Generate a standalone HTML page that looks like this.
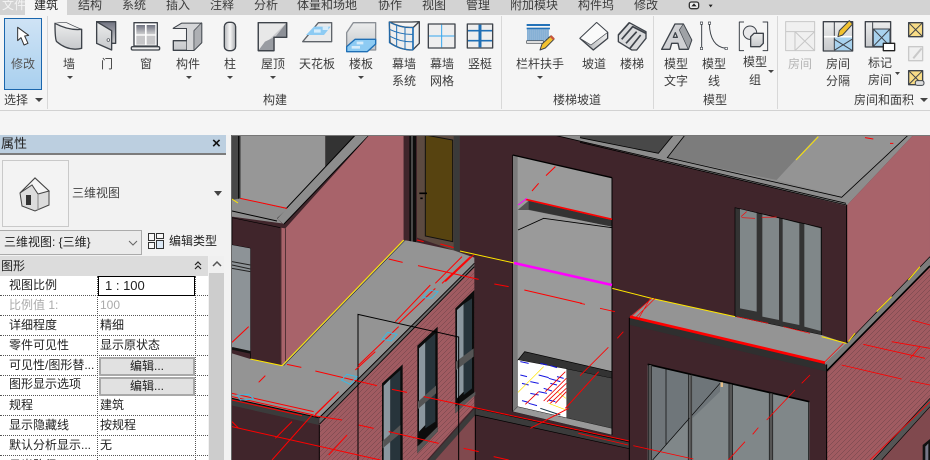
<!DOCTYPE html>
<html lang="zh"><head><meta charset="utf-8"><title>Revit</title>
<style>
html,body{margin:0;padding:0;width:930px;height:460px;overflow:hidden;background:#f5f5f5}
body{position:relative;font-family:"Liberation Sans","Noto Sans CJK SC",sans-serif;font-size:12px;color:#3c3c3c;line-height:16px}
.a{position:absolute;white-space:nowrap}
.c{position:absolute;white-space:nowrap;transform:translateX(-50%)}
svg{position:absolute;left:0;top:0}
#tabs{position:absolute;left:0;top:0;width:930px;height:15px;background:#d3d3d3}
#act{position:absolute;left:25px;top:0;width:42px;height:15px;background:#f5f5f5}
#rb{position:absolute;left:0;top:110px;width:930px;height:1px;background:#d2d2d2}
.sep{position:absolute;top:16px;width:1px;height:93px;background:#d8d8d8}
#mod{position:absolute;left:4px;top:18px;width:36px;height:70px;border:1px solid #1a66ad;background:linear-gradient(#cfe3f5,#a9d0ef)}
#prop{position:absolute;left:0;top:135px;width:231px;height:325px;background:#f2f2f2}
#title{position:absolute;left:0;top:0;width:226px;height:18px;background:#bccfe0;color:#222}
#rule{position:absolute;left:0;top:18px;width:226px;height:2px;background:#7c7c7c}
#tile{position:absolute;left:2px;top:25px;width:65px;height:65px;border:1px solid #c9c9c9;background:#f3f3f3}
#dd{position:absolute;left:-1px;top:95px;width:141px;height:23px;border:1px solid #ababab;background:#ebebeb;color:#222}
#hd{position:absolute;left:0;top:121px;width:208px;height:20px;background:#dcdcdc;color:#222}
#sb{position:absolute;left:209px;top:121px;width:15px;height:204px;background:#cdcdcd}
#sbt{position:absolute;left:0;top:0;width:15px;height:17px;background:#f0f0f0}
#tbl{position:absolute;left:0;top:141px;width:208px;height:184px;background:#fff;color:#222}
.ln{position:absolute;left:0;width:208px;height:0;border-top:1px dotted #555}
.vl{position:absolute;top:0;height:184px;width:0;border-left:1px dotted #555}
.k{position:absolute;left:9px;white-space:nowrap}
.v{position:absolute;left:100px;white-space:nowrap}
.b{position:absolute;left:99px;width:92px;height:15px;border:2px solid #a9a9a9;background:#e1e1e1;text-align:center;line-height:15px;color:#222}
#f1{position:absolute;left:98px;top:0;width:95px;height:18px;border:1px solid #000;background:#fff;line-height:18px;font-size:13px;text-indent:6px}
</style></head><body>
<div id="tabs"></div><div id="act"></div>
<div class="c" style="left:14px;top:-3px;color:#f3f3f3">文件</div>
<div class="c" style="left:46px;top:-3px;color:#222">建筑</div>
<div class="c" style="left:90px;top:-3px">结构</div>
<div class="c" style="left:134px;top:-3px">系统</div>
<div class="c" style="left:178px;top:-3px">插入</div>
<div class="c" style="left:222px;top:-3px">注释</div>
<div class="c" style="left:266px;top:-3px">分析</div>
<div class="c" style="left:327px;top:-3px">体量和场地</div>
<div class="c" style="left:390px;top:-3px">协作</div>
<div class="c" style="left:434px;top:-3px">视图</div>
<div class="c" style="left:478px;top:-3px">管理</div>
<div class="c" style="left:534px;top:-3px">附加模块</div>
<div class="c" style="left:596px;top:-3px">构件坞</div>
<div class="c" style="left:646px;top:-3px">修改</div>

<div id="mod"></div>
<div class="sep" style="left:47px"></div><div class="sep" style="left:501px"></div>
<div class="sep" style="left:653px"></div><div class="sep" style="left:777px"></div>
<div id="rb"></div>

<div class="c" style="left:23px;top:56px;color:#555">修改</div>
<div class="c" style="left:16px;top:92px">选择</div>
<div class="c" style="left:69px;top:56px">墙</div>
<div class="c" style="left:107px;top:56px">门</div>
<div class="c" style="left:146px;top:56px">窗</div>
<div class="c" style="left:188px;top:56px">构件</div>
<div class="c" style="left:230px;top:56px">柱</div>
<div class="c" style="left:273px;top:56px">屋顶</div>
<div class="c" style="left:317px;top:56px">天花板</div>
<div class="c" style="left:361px;top:56px">楼板</div>
<div class="c" style="left:404px;top:56px">幕墙</div><div class="c" style="left:404px;top:73px">系统</div>
<div class="c" style="left:442px;top:56px">幕墙</div><div class="c" style="left:442px;top:73px">网格</div>
<div class="c" style="left:480px;top:56px">竖梃</div>
<div class="c" style="left:540px;top:56px">栏杆扶手</div>
<div class="c" style="left:594px;top:56px">坡道</div>
<div class="c" style="left:632px;top:56px">楼梯</div>
<div class="c" style="left:676px;top:56px">模型</div><div class="c" style="left:676px;top:73px">文字</div>
<div class="c" style="left:714px;top:56px">模型</div><div class="c" style="left:714px;top:73px">线</div>
<div class="c" style="left:755px;top:54px">模型</div><div class="c" style="left:755px;top:72px">组</div>
<div class="c" style="left:800px;top:56px;color:#b5b5b5">房间</div>
<div class="c" style="left:838px;top:56px">房间</div><div class="c" style="left:838px;top:73px">分隔</div>
<div class="c" style="left:880px;top:55px">标记</div><div class="c" style="left:880px;top:72px">房间</div>
<div class="c" style="left:275px;top:92px">构建</div>
<div class="c" style="left:577px;top:92px">楼梯坡道</div>
<div class="c" style="left:715px;top:92px">模型</div>
<div class="c" style="left:884px;top:92px">房间和面积</div>

<!-- ribbon icons -->
<svg width="930" height="135" viewBox="0 0 930 135">
<defs>
<linearGradient id="g1" x1="0" y1="0" x2="0" y2="1"><stop offset="0" stop-color="#eceded"/><stop offset="1" stop-color="#c6c8cb"/></linearGradient>
<linearGradient id="g2" x1="0" y1="0" x2="0" y2="1"><stop offset="0" stop-color="#6f7280"/><stop offset="1" stop-color="#cfcfd0"/></linearGradient>
<linearGradient id="g3" x1="0" y1="0" x2="1" y2="0"><stop offset="0" stop-color="#b4b6b9"/><stop offset=".5" stop-color="#f7f7f7"/><stop offset="1" stop-color="#a9abae"/></linearGradient>
<linearGradient id="g4" x1="0" y1="0" x2="1" y2="0"><stop offset="0" stop-color="#9da0a4"/><stop offset="1" stop-color="#f0f0f0"/></linearGradient>
</defs>
<g transform="scale(.3333)" stroke="#3e434a" stroke-width="4" fill="url(#g1)" stroke-linejoin="round">
<path d="M53 82V122L63 113 72 135 84 130 74 108 86 106Z" fill="#fff" stroke="#333" stroke-width="3"/>
<path d="M165 70Q205 92 245 88V145Q205 155 170 125 165 118 165 70Z"/><path d="M165 70Q185 66 200 68 225 80 245 88" fill="#f4f4f4" stroke-width="2"/>
<path d="M290 65H347V130H290Z" fill="url(#g2)"/><path d="M290 65 335 92V150L290 130Z"/><circle cx="325" cy="120" r="4" fill="#fff" stroke-width="2"/>
<rect x="402" y="68" width="70" height="70" fill="#fff"/><rect x="409" y="75" width="26" height="28" fill="url(#g2)" stroke="none"/><rect x="440" y="75" width="26" height="28" fill="url(#g2)" stroke="none"/><rect x="409" y="107" width="26" height="27" fill="#c6c6c8" stroke="none"/><rect x="440" y="107" width="26" height="27" fill="#c6c6c8" stroke="none"/><rect x="394" y="140" width="85" height="10" rx="4" fill="#eee"/>
<path d="M520 85 545 70H605V128L582 151H520V122H560V85Z"/><path d="M520 85 545 70H605L582 92V151H560V85Z" fill="#d5d6d8" stroke-width="2"/><path d="M582 92V151L605 128V68Z" fill="#aeb0b4" stroke-width="2"/>
<rect x="673" y="67" width="34" height="85" rx="13" fill="url(#g3)"/>
<path d="M775 68H860V112H822V152H775Z" fill="#c9cacd"/><path d="M775 68H860L825 102 775 152Z" fill="#e8e8e8" stroke="none"/><path d="M860 68V112H825Z" fill="#8d9097" stroke="none"/><path d="M775 152H822V112L795 125Z" fill="#999ca2" stroke="none"/><path d="M775 68H860V112H822V152H775Z" fill="none"/>
</g>
<g transform="translate(310,0) scale(.3333)" stroke="#3e434a" stroke-width="4" fill="url(#g1)" stroke-linejoin="round">
<path d="M-22 125 25 68H65V125Z" fill="#e9eaeb" stroke="#5f646a"/><path d="M-12 105 12 80H62L42 105Z" fill="#8dcbf3" stroke="none"/><path d="M12 88H32V98H12ZM38 80H55V90H38Z" fill="#d6ecfa" stroke="none"/>
<path d="M110 98 130 68H197V150H110Z" stroke="#8b9096"/><path d="M110 140 135 118H197V132L172 155H110Z" fill="#8dcbf3" stroke="#1f6fb5"/><path d="M140 125H160V133H140ZM125 138H150V146H125Z" fill="#d6ecfa" stroke="none"/>
<path d="M238 66Q275 85 310 82L328 65V130L308 150Q270 150 240 128Z" fill="#eee"/><path d="M310 82V150M260 76V140M285 82V148M238 88Q275 105 310 103M238 108Q275 128 310 125" fill="none" stroke="#1f6fb5" stroke-width="3"/><path d="M238 66H305L328 65" fill="none"/><path d="M238 66V128Q270 150 308 150V82Q272 85 238 66Z" fill="none" stroke="#1f6fb5" stroke-width="3"/>
<rect x="355" y="72" width="80" height="72" fill="#eee"/><path d="M395 74V142M357 108H433" stroke="#35a6ee" stroke-width="3" fill="none"/>
<rect x="472" y="72" width="76" height="72" fill="#eee"/><path d="M510 74V142" stroke="#1f6fb5" stroke-width="9" fill="none"/><path d="M474 92H546M474 122H546" stroke="#1f6fb5" stroke-width="5" fill="none"/>
<rect x="650" y="72" width="70" height="6" fill="#2372b8" stroke="none"/><rect x="650" y="83" width="70" height="5" fill="#2372b8" stroke="none"/><path d="M654 88V122M660 88V122M666 88V122M672 88V122M678 88V122M684 88V122M690 88V122M696 88V122M702 88V122M708 88V122M714 88V122" stroke="#2372b8" stroke-width="3"/><rect x="650" y="122" width="50" height="8" fill="#ddd" stroke-width="2"/>
<path d="M690 150 696 132 722 108 732 118 706 144Z" fill="#f2c230" stroke-width="3"/><path d="M722 108 732 118" stroke="#c8553d" stroke-width="7"/>
<path d="M810 115 860 68 893 97V115L850 150Z" fill="url(#g4)"/><path d="M810 115 860 68 893 97 843 135Z" fill="#fafafa" stroke-width="2"/>
</g>
<g transform="translate(620,0) scale(.3333)" stroke="#3e434a" stroke-width="4" fill="url(#g1)" stroke-linejoin="round">
<path d="M-5 105 28 68 78 95V115L50 150H35L-5 125Z" fill="#dadbdd"/><path d="M-5 105 28 68M5 118 38 80 78 100M18 130 50 95M30 145 62 105" fill="none" stroke-width="5"/>
<path d="M125 148 165 72H190L215 120 205 148H178L174 130H155L150 148ZM160 112H172L166 98Z" fill="#d0d1d4"/><path d="M190 72 215 120 205 148 178 90Z" fill="#9fa2a6" stroke-width="2"/>
<path d="M245 70V145M268 70Q270 140 318 145" fill="none" stroke-width="3"/><g fill="#fff" stroke-width="2"><rect x="241" y="66" width="7" height="7"/><rect x="241" y="142" width="7" height="7"/><rect x="265" y="66" width="7" height="7"/><rect x="315" y="142" width="7" height="7"/></g>
<path d="M372 66H358V152H372M428 66H443V152H428" fill="none" stroke-width="3"/><circle cx="390" cy="98" r="20" fill="#e8e8ea" stroke-width="3"/><path d="M392 110 402 100H430V130L420 140H392Z"/>
<g stroke="#c7c7c7" fill="none" stroke-width="3"><rect x="497" y="65" width="87" height="87" fill="#f0f0f0"/><path d="M497 95H584M525 95V152M525 95 584 152M584 95 525 152"/></g>
<rect x="610" y="65" width="88" height="88" fill="url(#g1)"/><path d="M643 110H696V151H643Z" fill="#a8d2ee" stroke="none"/><path d="M643 118 696 151M696 118 643 151M643 65V150" fill="none" stroke-width="3"/><path d="M612 110H696" stroke="#fff" stroke-width="5"/>
<path d="M654 110 658 92 688 62 698 72 668 105Z" fill="#f2c230" stroke-width="3"/>
<rect x="736" y="65" width="76" height="76" fill="url(#g1)"/><path d="M758 67V139M760 87H810V139H760Z" fill="#a8d2ee" stroke-width="3"/><path d="M760 87 810 139M810 87 760 139" fill="none" stroke-width="3"/><rect x="790" y="130" width="34" height="22" fill="#fff" stroke="#222"/>
<rect x="866" y="68" width="42" height="42" fill="#f8dc86"/><path d="M868 70 906 108M906 70 868 108" fill="none" stroke-width="3"/>
<rect x="866" y="140" width="42" height="42" fill="#f0f0f0" stroke="#c9c9c9"/><path d="M880 175 905 145" stroke="#c9c9c9" stroke-width="6"/>
<rect x="866" y="212" width="42" height="42" fill="#f8dc86"/><path d="M868 214 906 252M906 214 868 252" fill="none" stroke-width="3"/><rect x="886" y="242" width="26" height="14" rx="6" fill="#ddd" stroke-width="3"/>
<rect x="208" y="6" width="28" height="20" rx="6" fill="#eee" stroke="#333"/><path d="M222 10 230 19H214Z" fill="#222" stroke="none"/><path d="M266 14H278L272 22Z" fill="#222" stroke="none"/>
</g>
<g fill="#444">
<path d="M35 98h8l-4 4z"/><path d="M67 76h6l-3 3z"/><path d="M186 76h6l-3 3z"/><path d="M227 76h6l-3 3z"/><path d="M270 76h6l-3 3z"/><path d="M358 76h6l-3 3z"/><path d="M537 76h6l-3 3z"/><path d="M768 70h6l-3 3z"/><path d="M895 72h5l-2.500 3z"/><path d="M920 98h8l-4 4z"/>
</g>
</svg>

<!-- properties -->
<div id="prop">
<div id="title"></div><div class="a" style="left:1px;top:0;font-size:13px;line-height:18px;color:#222">属性</div>
<div class="a" style="left:212px;top:0;font-size:15px;line-height:18px;color:#111;font-weight:700">×</div>
<div id="rule"></div>
<div id="tile"></div>
<div class="a" style="left:72px;top:50px;color:#444">三维视图</div>
<div class="a" style="left:169px;top:98px;color:#222">编辑类型</div>
<div id="dd"><span class="a" style="left:4px;top:3px">三维视图: {三维}</span></div>
<div id="hd"><span class="a" style="left:1px;top:2px">图形</span></div>
<div id="sb"><div id="sbt"></div></div>
<div id="tbl">
<div class="ln" style="top:19px"></div><div class="ln" style="top:39px"></div><div class="ln" style="top:59px"></div><div class="ln" style="top:79px"></div><div class="ln" style="top:99px"></div><div class="ln" style="top:119px"></div><div class="ln" style="top:139px"></div><div class="ln" style="top:159px"></div><div class="ln" style="top:179px"></div>
<div class="vl" style="left:97px"></div><div class="vl" style="left:195px"></div>
<div id="f1">1 : 100</div>
<div class="k" style="top:1px">视图比例</div>
<div class="k" style="top:21px;color:#aaa">比例值 1:</div><div class="v" style="top:21px;color:#aaa">100</div>
<div class="k" style="top:41px">详细程度</div><div class="v" style="top:41px">精细</div>
<div class="k" style="top:61px">零件可见性</div><div class="v" style="top:61px">显示原状态</div>
<div class="k" style="top:81px">可见性/图形替...</div><div class="b" style="top:81px">编辑...</div>
<div class="k" style="top:100px">图形显示选项</div><div class="b" style="top:101px">编辑...</div>
<div class="k" style="top:121px">规程</div><div class="v" style="top:121px">建筑</div>
<div class="k" style="top:141px">显示隐藏线</div><div class="v" style="top:141px">按规程</div>
<div class="k" style="top:161px">默认分析显示...</div><div class="v" style="top:161px">无</div>
<div class="k" style="top:181px">日光路径</div><div class="v" style="top:181px">□</div>
</div>
<svg width="232" height="150" viewBox="0 0 232 150">
<path d="M20 58 35 43 49 56V70L35 76 22 71Z" fill="#dcdcdc" stroke="#444" stroke-width="1"/><path d="M20 58 35 43 49 56 38 59 32 50Z" fill="#f5f5f5" stroke="#444" stroke-width="1"/><rect x="26" y="60" width="5" height="10" fill="#333"/><path d="M38 59V75" stroke="#888"/>
<path d="M214 56h8l-4 5z" fill="#444"/>
<path d="M129 106 133 110 137 106" fill="none" stroke="#666" stroke-width="1"/>
<g fill="#f7f7f7" stroke="#333"><rect x="148.500" y="98.500" width="6" height="7"/><rect x="148.500" y="107.500" width="6" height="6"/><rect x="156.500" y="98.500" width="7" height="5"/><rect x="156.500" y="105.500" width="7" height="8" fill="#dbe8f5"/></g>
<path d="M195 130 198 127 201 130M195 134 198 131 201 134" fill="none" stroke="#222" stroke-width="1.200"/>
<path d="M213 131 217 127 221 131" fill="none" stroke="#555" stroke-width="1.500"/>
</svg>
</div>
<div class="a" style="left:231px;top:135px;width:1px;height:325px;background:#666"></div>

<!-- viewport -->
<svg width="698" height="325" style="left:232px;top:135px;background:#40252b" viewBox="0 -1 698 325">
<defs>
<pattern id="h" width="15" height="15" patternUnits="userSpaceOnUse"><rect width="15" height="15" fill="#a05b61"/><path d="M-3 3 3 -3M-3 18 18 -3M12 18 18 12" stroke="#6a4247" stroke-width="1.500"/></pattern>
</defs>
<g transform="translate(0,-1) scale(.33333)" stroke-linejoin="miter">
<!-- far left top -->
<rect x="0" y="0" width="25" height="200" fill="#484848"/><path d="M20 0V195M25 0V195" stroke="#000" stroke-width="3"/>
<path d="M25 0H280V100L165 222 25 190Z" fill="#979797"/>
<path d="M280 0H370L280 100Z" fill="#333"/>
<path d="M370 0H412L155 268 135 250Z" fill="#8d8d8d"/>
<path d="M370 0 135 250M412 0 155 268" stroke="#000" stroke-width="3" fill="none"/>
<path d="M0 195 25 190 165 222 135 250 150 265 0 245Z" fill="#8d8d8d"/>
<path d="M0 228 135 258" stroke="#000" stroke-width="3"/>
<!-- small left wall -->
<path d="M0 248 145 278V692L55 672V340L0 330Z" fill="#40252b" stroke="#000" stroke-width="2"/>
<path d="M0 330 55 340V650L0 640Z" fill="#8d9397"/><path d="M0 380 55 390M0 390 55 402M0 400 55 410" stroke="#222" stroke-width="3"/><path d="M0 640 55 652" stroke="#111" stroke-width="8"/>
<!-- pink wall -->
<path d="M145 278 160 280 412 0H515V315L147 692H145Z" fill="#a8636a"/>
<path d="M160 280V680M147 278V692" stroke="#2a1a1d" stroke-width="2"/>
<!-- door -->
<rect x="515" y="0" width="20" height="318" fill="#40252b"/><rect x="532" y="0" width="20" height="322" fill="#0d0d0d"/><path d="M540 0V320" stroke="#555" stroke-width="5"/>
<path d="M555 0H683V352L555 308Z" fill="#5c4a40"/><path d="M665 0H683V352L665 345Z" fill="#3a3a3a"/><path d="M580 0 662 15V320L580 303Z" fill="#574310" stroke="#111" stroke-width="3"/>
<path d="M562 175H585M565 190H572" stroke="#000" stroke-width="5"/>
<!-- floor -->
<path d="M515 315 555 322 665 346 727 368V388L260 848 0 790V655L55 672 147 692Z" fill="#949494"/>
<path d="M727 388 262 850V870L727 400Z" fill="#6a6a6a"/><path d="M727 385 262 848M727 395 262 868" stroke="#000" stroke-width="2.500"/>
<path d="M0 790 260 848V870L0 812Z" fill="#3b3b3b"/><path d="M0 790 260 848" stroke="#000" stroke-width="3"/>
<path d="M0 812 260 870V975H0Z" fill="#40252b"/>
<!-- brick wall -->
<path d="M262 870 727 398V815L585 975H262Z" fill="url(#h)"/>
<path d="M262 870V975" stroke="#000" stroke-width="3"/>
<path d="M730 818 590 975H610L730 840Z" fill="#3b3b3b"/><path d="M730 840 610 975H730Z" fill="#80494e"/>
<path d="M730 818V975" stroke="#000" stroke-width="3"/>
<!-- windows on brick -->
<path d="M670 520 727 465V780L670 835Z" fill="#0c0c0c"/><path d="M675 525 695 507V770L675 790Z" fill="#8b979f"/><path d="M695 507 720 490V760L695 780Z" fill="#27343b"/><path d="M672 680 725 640V665L672 705Z" fill="#555"/>
<path d="M670 815 730 770V780L670 835Z" fill="#555"/>
<path d="M556 632 617 575V890L556 955Z" fill="#0c0c0c"/><path d="M561 640 580 622V870L561 890Z" fill="#8b979f"/><path d="M580 622 610 595V860L580 880Z" fill="#27343b"/><path d="M558 800 612 752V775L558 822Z" fill="#555"/><path d="M556 935 617 875V890L556 955Z" fill="#555"/>
<path d="M450 745 512 688V975H450Z" fill="#0c0c0c"/><path d="M455 752 475 732V975H455Z" fill="#8b979f"/><path d="M475 732 505 705V975H475Z" fill="#27343b"/><path d="M452 918 505 870V895L452 940Z" fill="#555"/>
<!-- thin lines -->
<path d="M378 975V538L680 606V975" fill="none" stroke="#000" stroke-width="3"/>
<!-- yellow left -->
<path d="M515 315 150 692 55 672M0 192 18 204" fill="none" stroke="#ffe600" stroke-width="3"/><path d="M520 315 155 692" fill="none" stroke="#000" stroke-width="1.500"/>
<!-- opening -->
<path d="M842 60 1140 128V900L842 830Z" fill="#9a9a9a"/>
<path d="M842 60 857 65V815L842 830Z" fill="#7b7b7b"/>
<path d="M842 60 1140 128" stroke="#000" stroke-width="4"/>
<path d="M857 225 890 197 1140 255V275L890 225Z" fill="#555"/>
<path d="M890 198 1140 255V275L890 224Z" fill="#333"/>
<path d="M858 285 935 250 1140 278" fill="none" stroke="#000" stroke-width="2.500"/>
<path d="M858 675 878 650 1140 710V730L1003 702Z" fill="#333" stroke="#000" stroke-width="2"/>
<path d="M1003 702 1140 730V880L1003 850Z" fill="#484848"/>
<path d="M858 675 1003 702V848L858 815Z" fill="#fff"/>
<path d="M842 830 857 815 1140 880V900L1003 868Z" fill="#999" stroke="#222" stroke-width="1.500"/>
<path d="M842 830V60" stroke="#000" stroke-width="2"/>
<path d="M1140 128V900" stroke="#000" stroke-width="3"/>
<!-- white area detail -->
<g stroke="#1414e0" stroke-width="3"><path d="M865 680 890 685M925 685 945 690M955 692 975 698M865 720 885 725M895 740 920 745M920 720 950 728M975 725 995 730M870 745 890 750M950 730 985 740M920 770 945 775M955 745 975 750M895 775 920 780M935 760 960 768M870 797 890 802M890 805 915 812M950 795 970 800"/></g>
<g stroke="#ffe600" stroke-width="2"><path d="M858 772 935 695M950 805 1002 825M975 770 1002 790"/></g>
<g stroke="#e00" stroke-width="2.500"><path d="M880 808 920 770M935 798 1003 730M945 800 1003 745M955 805 1003 760M970 805 1003 770M940 770 1000 710"/></g>
<path d="M925 820 985 840" stroke="#134" stroke-width="3"/>
<!-- lower band -->
<path d="M730 820 1192 921V941L730 840Z" fill="#3b3b3b"/>
<path d="M730 820 1192 921M730 840 1192 941" stroke="#000" stroke-width="2"/>
<!-- red lines left -->
<g stroke="#f00" stroke-width="3" fill="none">
<path d="M25 190 165 220M470 372 512 382M558 392 740 433M787 447 830 455M877 465 1050 505M165 688 208 697M100 722 80 742M50 575 0 622M0 775 245 830M0 785 245 840M0 795 210 842M245 842 330 855M250 708 435 752M380 870 425 880M480 763 525 772M575 785 1192 918M0 875 445 975M470 890 620 925M695 940 740 950M785 965 830 975M240 840 120 975M180 860 130 910M345 900 290 960M970 95 942 122M920 145 900 168M725 360 640 440M715 365 630 445M690 365 610 445M610 460 500 565M595 450 490 560M500 575 380 690M430 650 370 705M320 770 250 838M310 780 245 845M555 315 575 320M625 327 665 338M0 860 20 880"/>
<path d="M880 193 1140 253" stroke-width="5"/>
<path d="M858 210 885 190" stroke="#f0f"/>
<path d="M1100 710 1000 820M1010 820 895 880"/>
</g>
<g fill="none" stroke="#3fb8e0" stroke-width="3"><path d="M572 488 590 465 618 470 600 490Z"/><path d="M450 613 467 592 495 598 478 618Z"/><path d="M328 735 345 718 375 725 355 748Z"/><path d="M15 780 50 778 65 792 25 795Z"/></g>
</g>

<g transform="translate(348,-1) scale(.33333)">
<!-- right part in zoom 6 coordinates -->
<path d="M-100 -5 800 212 1000 0H-100Z" fill="#8d8d8d"/>
<path d="M0 0H280L235 55 0 8Z" fill="#484848"/>
<path d="M315 0H715L590 135 262 68Z" fill="#7c7c7c"/>
<path d="M715 0H985L785 185 590 135Z" fill="#949494"/>
<path d="M280 0 235 55 0 8M315 0 262 68 785 187 985 0M-100 -5 798 205M0 22 800 210" fill="none" stroke="#000" stroke-width="2.500"/>
<path d="M715 5 648 75" stroke="#ffe600" stroke-width="3"/>
<path d="M855 8 880 12M930 25 940 25" stroke="#f00" stroke-width="3"/>
<path d="M800 212 1000 0H1050V365L800 625Z" fill="#a8636a"/>
<path d="M800 210V625" stroke="#000" stroke-width="3"/>
<!-- lower wall right -->
<path d="M740 710 1050 395V800L890 975H740Z" fill="url(#h)"/>
<path d="M800 625 1050 365V395L740 710 735 685Z" fill="#7c7c7c"/>
<path d="M800 625 1050 365" stroke="#000" stroke-width="2"/>
<path d="M740 708 1050 393" stroke="#000" stroke-width="5"/>
<path d="M1020 395 985 435M935 485 890 530M825 595 805 620" stroke="#ffe600" stroke-width="3"/>
<path d="M1050 790 880 975H905L1050 815Z" fill="#555"/>
<path d="M1050 815 905 975H1050Z" fill="#80494e"/><path d="M1050 790 880 975M1050 815 905 975" stroke="#000" stroke-width="2"/>
<path d="M1028 930 1050 912V975H1028Z" fill="#111"/><path d="M1036 935 1045 925V975H1036Z" fill="#778"/>
<!-- upper windows -->
<path d="M465 218 725 278V600L465 545Z" fill="#333" stroke="#000" stroke-width="2"/>
<path d="M480 222 530 234V530L480 520Z" fill="#808789"/><path d="M547 238 597 250V555L547 545Z" fill="#808789"/><path d="M608 252 658 265V570L608 560Z" fill="#808789"/><path d="M673 267 722 280V588L673 575Z" fill="#808789"/>
<path d="M485 248 525 250M545 247 590 246M483 245 500 230" stroke="#f00" stroke-width="2"/>
<!-- balcony -->
<path d="M215 490 465 545 725 600 800 625 735 685 150 545Z" fill="#949494"/>
<path d="M97 460 215 490 465 545M725 605 800 625" fill="none" stroke="#ffe600" stroke-width="3"/>
<path d="M150 548 215 490M165 550 225 490M175 552 210 492M735 680 790 625M745 670 785 630M470 545 565 565M610 575 690 595" stroke="#f00" stroke-width="2"/>
<path d="M150 548 740 690V710L150 570Z" fill="#2f2f2f"/>
<path d="M148 570 740 710V975H148Z" fill="#40252b"/>
<path d="M148 548V975M740 688V975" stroke="#000" stroke-width="3"/>
<path d="M150 545 735 683" stroke="#f00" stroke-width="8"/>
<!-- lower windows -->
<path d="M203 688 688 800V975H203Z" fill="#808789"/>
<path d="M218 692 258 702V930L218 975Z" fill="#6f7579"/><path d="M258 702 322 716V860L258 930Z" fill="#6f767a"/><path d="M337 720 420 740V770L337 850Z" fill="#6e7579"/>
<path d="M203 688 688 800" stroke="#000" stroke-width="5"/>
<path d="M205 688V975M215 690V975M325 716V975M335 718V975M447 745V975M457 748V975M568 772V975M578 775V975M686 800V975" stroke="#111" stroke-width="2.500"/>
<path d="M258 702V930M420 745 218 975" stroke="#000" stroke-width="2"/>
<rect x="328" y="720" width="7" height="255" fill="#555"/><rect x="449" y="748" width="7" height="227" fill="#555"/><rect x="570" y="775" width="7" height="200" fill="#555"/><rect x="207" y="690" width="7" height="285" fill="#555"/>
<rect x="422" y="742" width="7" height="14" fill="#e8c08a"/>
<g stroke="#f00" stroke-width="2.500" fill="none">
<path d="M0 505 15 508M60 520 105 530M130 590 112 610M85 637 0 722M690 720 665 745M645 765 560 855M535 878 518 898M495 920 445 975M-5 895 145 930M160 932 340 972M850 628 1035 670M935 620 1050 640M785 690 965 732M995 555 1050 570M990 738 1050 750M1020 635 990 670M1050 800 870 975"/>
</g>
</g>
<!-- magenta & yellow in viewport coordinates -->
<path d="M228 115 282 127" stroke="#ffe600" stroke-width="1" fill="none"/>
<path d="M282 127 380 149" stroke="#f0f" stroke-width="2.500" fill="none"/>
<path d="M0 -1H698" stroke="#777" stroke-width="2"/>
</svg>
</body></html>
